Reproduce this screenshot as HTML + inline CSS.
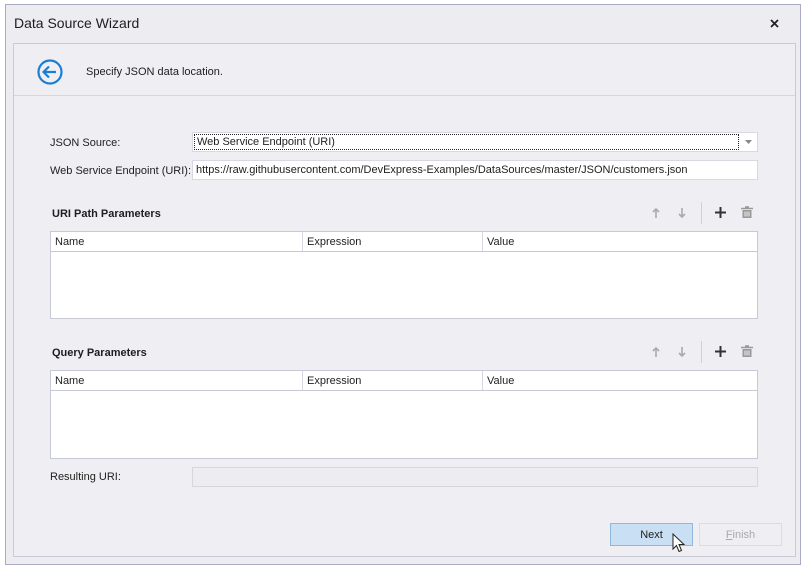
<!DOCTYPE html>
<html><head><style>
*{box-sizing:border-box;margin:0;padding:0}
body{width:808px;height:573px;background:#fff;font-family:"Liberation Sans",sans-serif;font-size:11px;color:#1e1e1e;position:relative;overflow:hidden}
.abs{position:absolute}
.win{left:5px;top:4px;width:796px;height:561px;background:#ececf1;border:1px solid #a9abc4}
.panel{left:13px;top:43px;width:783px;height:514px;background:#efeff3;border:1px solid #c9cad8}
.sep{left:14px;top:95px;width:781px;height:1px;background:#d6d6e2}
.inp{background:#fff;border:1px solid #d8d8e2;height:20px;padding:3px 3px;white-space:nowrap;overflow:hidden}
.grid{background:#fff;border:1px solid #c8c9d6}
.hdr{position:absolute;left:0;right:0;top:0;height:20px;border-bottom:1px solid #c8c9d6}
.hdr span{position:absolute;top:4px}
.vl{position:absolute;top:0;width:1px;height:19px;background:#d8d8e2}
.b{font-weight:bold}
</style></head><body>
<div class="abs win"></div>
<div class="abs" style="left:14px;top:15px;font-size:14px">Data Source Wizard</div>
<svg class="abs" style="left:770px;top:19px" width="9" height="9" viewBox="0 0 9 9"><path d="M1 1L8 8M8 1L1 8" stroke="#222" stroke-width="1.8"/></svg>
<div class="abs panel"></div>
<div class="abs sep"></div>
<svg class="abs" style="left:36px;top:58px" width="28" height="28" viewBox="0 0 28 28"><circle cx="14" cy="14" r="11.5" fill="none" stroke="#1a7fd4" stroke-width="2.2"/><path d="M20 14H8M13 8.5L7.5 14L13 19.5" fill="none" stroke="#1a7fd4" stroke-width="2.2"/></svg>
<div class="abs" style="left:86px;top:66px">Specify JSON data location.</div>
<div class="abs" style="left:50px;top:137px">JSON Source:</div>
<div class="abs inp" style="left:192px;top:132px;width:566px;padding:1px">
<div style="border:1px dotted #222;width:545px;height:16px;padding:0 2px;line-height:15px">Web Service Endpoint (URI)</div></div>
<svg class="abs" style="left:745px;top:140px" width="7" height="4"><path d="M0 0H7L3.5 4Z" fill="#888"/></svg>
<div class="abs" style="left:50px;top:165px">Web Service Endpoint (URI):</div>
<div class="abs inp" style="left:192px;top:160px;width:566px">https://raw.githubusercontent.com/DevExpress-Examples/DataSources/master/JSON/customers.json</div>

<div class="abs b" style="left:52px;top:208px">URI Path Parameters</div>
<svg class="abs" style="left:651px;top:207px" width="60" height="12"><path d="M5 11V2M2 5L5 2L8 5" fill="none" stroke="#aaa" stroke-width="1.6"/><path d="M31 1V10M28 7L31 10L34 7" fill="none" stroke="#aaa" stroke-width="1.6"/></svg>
<div class="abs" style="left:701px;top:202px;width:1px;height:22px;background:#d0d0dc"></div>
<svg class="abs" style="left:715px;top:207px" width="11" height="11"><path d="M5.5 0V11M0 5.5H11" stroke="#333" stroke-width="2"/></svg>
<svg class="abs" style="left:741px;top:206px" width="12" height="13"><path d="M0 2.5H12M4 1H8" stroke="#999" stroke-width="1.6"/><path d="M1.5 4H10.5V12H1.5Z" fill="#999"/><path d="M4 5.5V10.5M6 5.5V10.5M8 5.5V10.5" stroke="#efeff3" stroke-width="1"/></svg>
<div class="abs grid" style="left:50px;top:231px;width:708px;height:88px"><div class="hdr"><span style="left:4px">Name</span><div class="vl" style="left:251px"></div><span style="left:256px">Expression</span><div class="vl" style="left:431px"></div><span style="left:436px">Value</span></div></div>

<div class="abs b" style="left:52px;top:347px">Query Parameters</div>
<svg class="abs" style="left:651px;top:346px" width="60" height="12"><path d="M5 11V2M2 5L5 2L8 5" fill="none" stroke="#aaa" stroke-width="1.6"/><path d="M31 1V10M28 7L31 10L34 7" fill="none" stroke="#aaa" stroke-width="1.6"/></svg>
<div class="abs" style="left:701px;top:341px;width:1px;height:22px;background:#d0d0dc"></div>
<svg class="abs" style="left:715px;top:346px" width="11" height="11"><path d="M5.5 0V11M0 5.5H11" stroke="#333" stroke-width="2"/></svg>
<svg class="abs" style="left:741px;top:345px" width="12" height="13"><path d="M0 2.5H12M4 1H8" stroke="#999" stroke-width="1.6"/><path d="M1.5 4H10.5V12H1.5Z" fill="#999"/><path d="M4 5.5V10.5M6 5.5V10.5M8 5.5V10.5" stroke="#efeff3" stroke-width="1"/></svg>
<div class="abs grid" style="left:50px;top:370px;width:708px;height:89px"><div class="hdr"><span style="left:4px">Name</span><div class="vl" style="left:251px"></div><span style="left:256px">Expression</span><div class="vl" style="left:431px"></div><span style="left:436px">Value</span></div></div>

<div class="abs" style="left:50px;top:471px">Resulting URI:</div>
<div class="abs" style="left:192px;top:467px;width:566px;height:20px;background:#ececf1;border:1px solid #d6d6e0"></div>

<div class="abs" style="left:610px;top:523px;width:83px;height:23px;background:#c9dff3;border:1px solid #93b7da;text-align:center;line-height:22px">Next</div>
<div class="abs" style="left:699px;top:523px;width:83px;height:23px;border:1px solid #dcdce4;text-align:center;line-height:22px;color:#a8a8b0"><u>F</u>inish</div>
<svg class="abs" style="left:672px;top:533px" width="14" height="22" viewBox="0 0 14 22"><path d="M1 1V16L4.5 12.5L7 18.5L9.5 17.5L7 11.5H12Z" fill="#fff" stroke="#222" stroke-width="1"/></svg>
</body></html>
